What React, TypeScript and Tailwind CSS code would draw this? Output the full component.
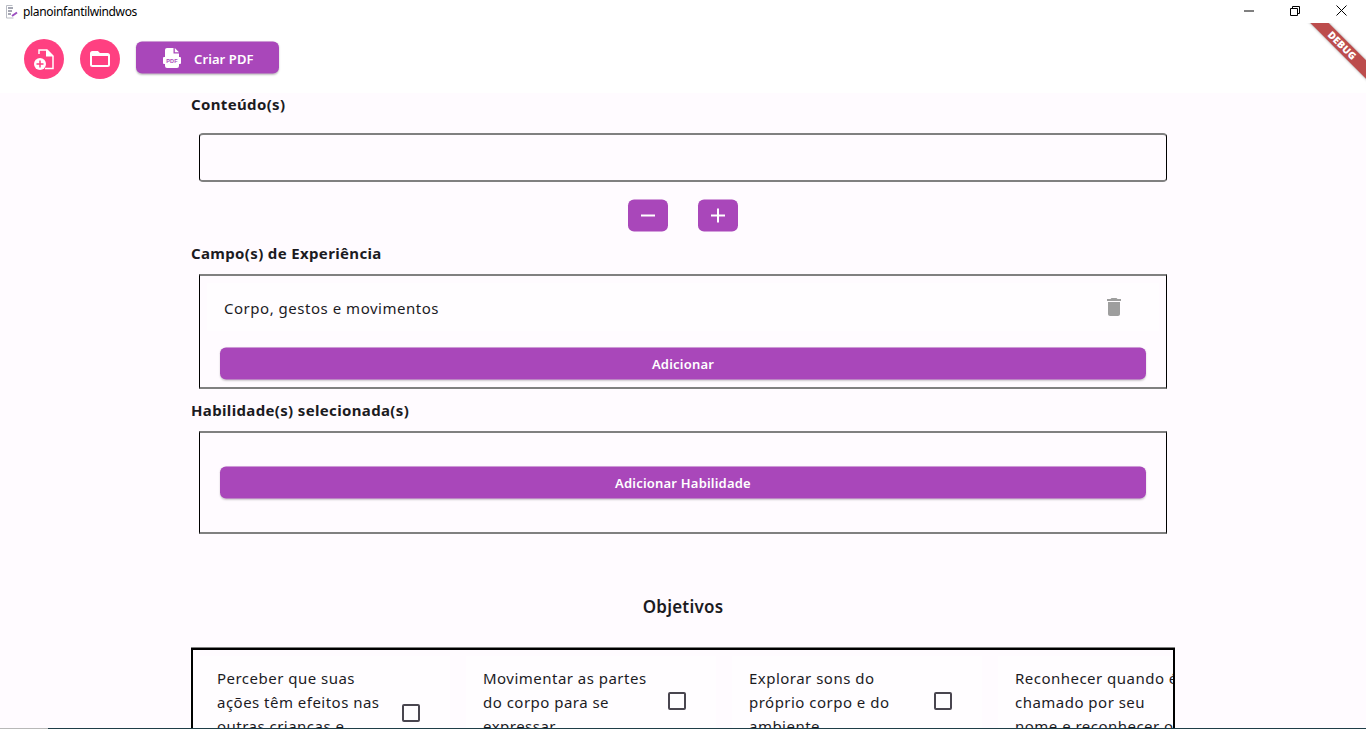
import { MdDelete } from 'react-icons/md'

const FONT = "font-['Noto_Sans','Open_Sans',sans-serif]"

const objetivos = [
    { text: ['Perceber que suas', 'ações têm efeitos nas', 'outras crianças e'], checkTop: 'mt-[48px]' },
    { text: ['Movimentar as partes', 'do corpo para se', 'expressar'], checkTop: 'mt-[36px]' },
    { text: ['Explorar sons do', 'próprio corpo e do', 'ambiente'], checkTop: 'mt-[36px]' },
    { text: ['Reconhecer quando é', 'chamado por seu', 'nome e reconhecer o'], checkTop: 'mt-[36px]' },
]

const AppIcon = () => (
    <svg width="16" height="16" viewBox="0 0 16 16" fill="none" className="shrink-0">
        <path d="M3.5 1.5h6M3.5 1.5v12.5h7" stroke="#b9bcc4" strokeWidth="1" />
        <path d="M5 4h5M5 7h4M5 10h3" stroke="#4a4f66" strokeWidth="1" />
        <path d="M9 12l5-3.5" stroke="#9c4fc0" strokeWidth="2" />
    </svg>
)

const NoteAddIcon = () => (
    <svg width="20" height="21" viewBox="0 0 20 21" fill="none">
        <path d="M5 5V1h8l6 6v12.500h-8" stroke="white" strokeWidth="1.500" />
        <path d="M12 .5v7h7.500z" fill="white" />
        <circle cx="6" cy="15" r="6" fill="white" />
        <path d="M6 11.500v7M2.500 15h7" stroke="#ff4081" strokeWidth="1.500" />
    </svg>
)

const FolderIcon = () => (
    <svg width="20" height="16" viewBox="0 0 20 16" fill="none">
        <path d="M1 2.500a1.500 1.500 0 0 1 1.500-1.500h5l2 2h8a1.500 1.500 0 0 1 1.500 1.500v9a1.500 1.500 0 0 1-1.500 1.500h-15a1.500 1.500 0 0 1-1.500-1.500z" stroke="white" strokeWidth="2" />
        <path d="M1 2h7l2 2h9v1h-18z" fill="white" />
    </svg>
)

const PdfIcon = () => (
    <svg width="18" height="21" viewBox="0 0 18 21" fill="none">
        <path d="M2 2.500a2 2 0 0 1 2-2h6.500v5.500h5.500v3.500h-14zM11.800 .5l4.200 4.200h-4.200zM2 16.500h14v2a2 2 0 0 1-2 2h-10a2 2 0 0 1-2-2z" fill="white" />
        <rect x="0" y="9.500" width="18" height="7" rx="1" fill="white" />
        <text x="9" y="15.300" textAnchor="middle" fontSize="5.500" fontWeight="800" fill="#a947ba" fontFamily="Liberation Sans">PDF</text>
    </svg>
)

const Label = ({ children, className = '' }: { children: string; className?: string }) => (
    <div className={`text-[15px] leading-[20px] font-bold text-[#1c1b1f] tracking-[0.35px] ${className}`}>{children}</div>
)

const WideButton = ({ children }: { children: string }) => (
    <button className="w-[926px] h-[32px] pt-[2px] -translate-y-[0.5px] rounded-[6px] bg-[#a947ba] text-white text-[13px] tracking-[0.2px] font-semibold shadow-[0_1px_2px_rgba(0,0,0,0.2)]">
        {children}
    </button>
)

export default function App() {
    return (
        <div className={`relative w-[1366px] h-[729px] overflow-hidden bg-[#fffbff] ${FONT}`}>
            {/* Title bar */}
            <div className="h-[23px] bg-white flex items-center">
                <div className="ml-[3px] mr-[4px]"><AppIcon /></div>
                <span className="text-[12px] leading-[23px] tracking-[-0.35px] text-black">planoinfantilwindwos</span>
                <div className="ml-auto flex h-full items-center pr-[2px] pb-[2px] text-black">
                    <div className="w-[46px] flex justify-center">
                        <svg width="10" height="10" viewBox="0 0 10 10"><path d="M0 5h10" stroke="black" /></svg>
                    </div>
                    <div className="w-[46px] flex justify-center">
                        <svg width="10" height="10" viewBox="0 0 10 10" fill="none">
                            <path d="M.5 2.500h7v7h-7zM2.500 2.500v-2h7v7h-2" stroke="black" />
                        </svg>
                    </div>
                    <div className="w-[46px] flex justify-center">
                        <svg width="11" height="11" viewBox="0 0 11 11"><path d="M.5 .5l10 10M10.500 .5l-10 10" stroke="black" /></svg>
                    </div>
                </div>
            </div>

            {/* Toolbar */}
            <div className="h-[70px] bg-white flex items-start pl-[24px] pt-[16px]">
                <button className="w-[40px] h-[40px] rounded-full bg-[#ff4081] flex items-center justify-center">
                    <NoteAddIcon />
                </button>
                <button className="ml-[16px] w-[40px] h-[40px] rounded-full bg-[#ff4081] flex items-center justify-center">
                    <FolderIcon />
                </button>
                <button className="ml-[16px] mt-[3px] w-[143px] h-[32px] -translate-y-[0.5px] rounded-[6px] bg-[#a947ba] flex items-center pl-[27px] gap-[13px] text-white text-[13px] tracking-[0.1px] font-semibold shadow-[0_1px_2px_rgba(0,0,0,0.25)]">
                    <PdfIcon />
                    <span className="pt-[4px]">Criar PDF</span>
                </button>
            </div>

            {/* Form */}
            <div className="ml-[191px] w-[984px] flex flex-col">
                <Label className="mt-[1px]">Conteúdo(s)</Label>
                <div className="mt-[19px] mx-[8px] h-[49px] border-x border-y-2 border-x-black border-y-[#808080] rounded-[4px]" />
                <div className="mt-[18px] flex justify-center gap-[30px]">
                    <button className="w-[40px] h-[32px] -translate-y-[0.5px] rounded-[6px] bg-[#a947ba] flex items-center justify-center">
                        <svg width="16" height="16" viewBox="0 0 16 16"><path d="M1 8h14" stroke="white" strokeWidth="2" /></svg>
                    </button>
                    <button className="w-[40px] h-[32px] -translate-y-[0.5px] rounded-[6px] bg-[#a947ba] flex items-center justify-center">
                        <svg width="16" height="16" viewBox="0 0 16 16"><path d="M1 8h14M8 1v14" stroke="white" strokeWidth="2" /></svg>
                    </button>
                </div>
                <Label className="mt-[11px]">Campo(s) de Experiência</Label>
                <div className="mt-[11px] mx-[8px] h-[115px] border-x border-y-2 border-x-black border-y-[#808080] flex flex-col items-center">
                    <div className="w-[952px] h-[48px] mt-[7px] bg-[#fffdff] flex items-center justify-between pl-[17px] pr-[33px]">
                        <span className="pt-[2px] text-[15px] tracking-[0.52px] text-[#1c1b1f]">Corpo, gestos e movimentos</span>
                        <MdDelete size={24} className="text-[#9e9e9e] -mt-[1px]" />
                    </div>
                    <div className="mt-[17px]"><WideButton>Adicionar</WideButton></div>
                </div>
                <Label className="mt-[11px]">Habilidade(s) selecionada(s)</Label>
                <div className="mt-[11px] mx-[8px] h-[103px] border-x border-y-2 border-x-black border-y-[#808080] flex justify-center pt-[34px]">
                    <WideButton>Adicionar Habilidade</WideButton>
                </div>
                <div className="mt-[61px] text-center text-[17px] leading-[24px] tracking-[0.2px] font-semibold text-[#1c1b1f]">Objetivos</div>

                {/* Objetivos list, cut by the window edge */}
                <div className="mt-[29px] h-[120px] border-2 border-black shadow-[0_-1px_0_#808080] flex overflow-hidden pl-[7px] pt-[6px]">
                    {objetivos.map((o) => (
                        <div key={o.text[0]} className="shrink-0 w-[250px] mr-[16px] h-[110px] bg-[#fffdff] flex items-start pl-[17px]">
                            <div className="w-[185px] shrink-0 pt-[10px] text-[15px] leading-[24px] tracking-[0.48px] text-[#1c1b1f] whitespace-nowrap">
                                {o.text.map((line) => <div key={line}>{line}</div>)}
                            </div>
                            <div className={`shrink-0 ${o.checkTop} w-[18px] h-[18px] border-2 border-[#49454f] rounded-[2px]`} />
                        </div>
                    ))}
                </div>
            </div>

            {/* Debug banner */}
            <div className="absolute top-[23px] right-0 w-[80px] h-[60px] overflow-hidden">
                <div className="absolute left-[-4px] top-[16px] w-[120px] h-[13px] rotate-45 bg-[#a00000]/70 shadow-[0_0_3px_rgba(0,0,0,0.35)] flex items-center justify-center text-white text-[10px] font-black tracking-[0.2px]">
                    DEBUG
                </div>
            </div>

            {/* Taskbar edge */}
            <div className="absolute bottom-0 left-0 w-full h-[1px] bg-[#1f3d47]" />
            <div className="absolute bottom-0 left-0 w-[48px] h-[1px] bg-[#b8b8b8]" />
        </div>
    )
}
